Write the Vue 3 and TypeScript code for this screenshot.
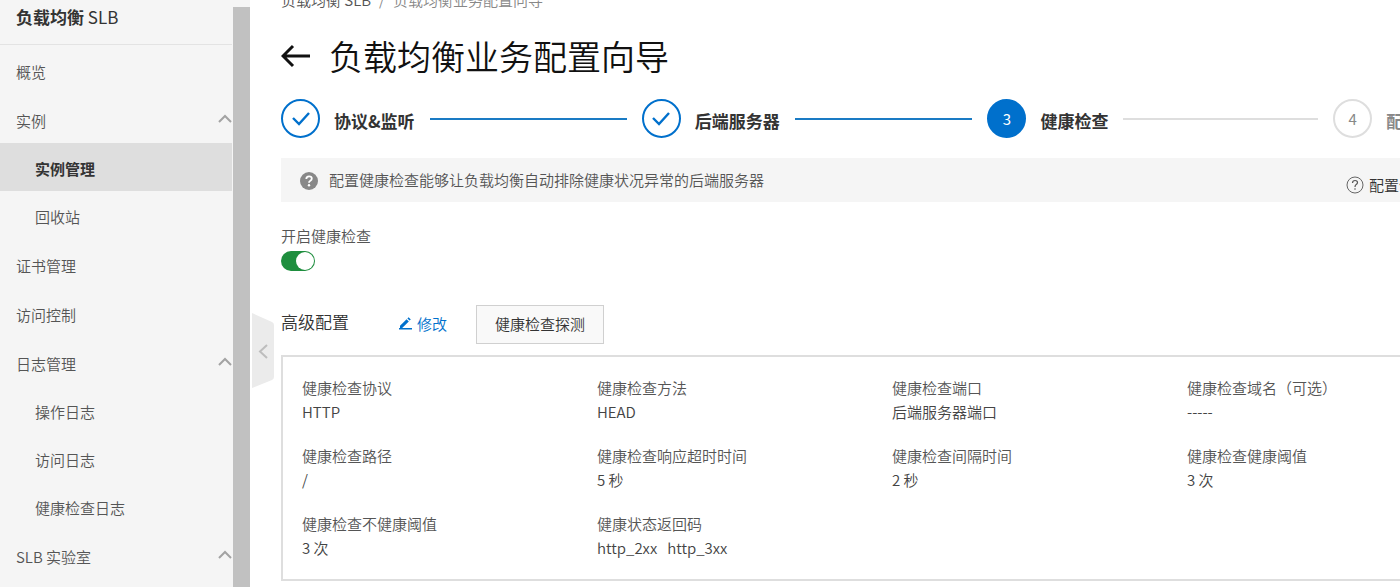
<script setup lang="ts">
import { ref } from 'vue'

interface NavItem {
  label: string
  level: 'top' | 'sub'
  active?: boolean
  expandable?: boolean
}

interface Step {
  label: string
  state: 'done' | 'current' | 'todo'
}

interface Field {
  label: string
  values: string[]
}

const nav: NavItem[] = [
  { label: '概览', level: 'top' },
  { label: '实例', level: 'top', expandable: true },
  { label: '实例管理', level: 'sub', active: true },
  { label: '回收站', level: 'sub' },
  { label: '证书管理', level: 'top' },
  { label: '访问控制', level: 'top' },
  { label: '日志管理', level: 'top', expandable: true },
  { label: '操作日志', level: 'sub' },
  { label: '访问日志', level: 'sub' },
  { label: '健康检查日志', level: 'sub' },
  { label: 'SLB 实验室', level: 'top', expandable: true },
]

const steps: Step[] = [
  { label: '协议&监听', state: 'done' },
  { label: '后端服务器', state: 'done' },
  { label: '健康检查', state: 'current' },
  { label: '配置审核', state: 'todo' },
]

const fields: Field[] = [
  { label: '健康检查协议', values: ['HTTP'] },
  { label: '健康检查方法', values: ['HEAD'] },
  { label: '健康检查端口', values: ['后端服务器端口'] },
  { label: '健康检查域名（可选）', values: ['-----'] },
  { label: '健康检查路径', values: ['/'] },
  { label: '健康检查响应超时时间', values: ['5 秒'] },
  { label: '健康检查间隔时间', values: ['2 秒'] },
  { label: '健康检查健康阈值', values: ['3 次'] },
  { label: '健康检查不健康阈值', values: ['3 次'] },
  { label: '健康状态返回码', values: ['http_2xx', 'http_3xx'] },
]

const enabled = ref(true)
</script>

<template>
  <div class="app">
    <aside class="sidebar">
      <div class="side-body">
        <h2 class="side-title">负载均衡 <span>SLB</span></h2>
        <nav>
          <a
            v-for="item in nav"
            :key="item.label"
            href="#"
            class="nav-item"
            :class="[item.level, { active: item.active }]"
          >
            <span>{{ item.label }}</span>
            <svg v-if="item.expandable" class="caret" viewBox="0 0 14 10" aria-hidden="true">
              <path d="M1 8 7 2l6 6" fill="none" stroke="#a3a3a3" stroke-width="2" />
            </svg>
          </a>
        </nav>
      </div>
      <div class="scroll-track"><div class="scroll-thumb"></div></div>
    </aside>

    <main class="main">
      <button class="collapse" type="button" aria-label="收起">
        <svg viewBox="0 0 22 75" aria-hidden="true">
          <path d="M0 0 20 9q2 1 2 3v52q0 2-2 3L0 75z" fill="#ebebeb" />
          <path d="M15 32 8 38.500l7 6.500" fill="none" stroke="#bdbdbd" stroke-width="2" />
        </svg>
      </button>

      <div class="content">
        <nav class="crumbs">
          <a href="#">负载均衡 SLB</a>
          <span class="slash">/</span>
          <span>负载均衡业务配置向导</span>
        </nav>

        <header class="heading">
          <button class="back" type="button" aria-label="返回">
            <svg viewBox="0 0 30 24" aria-hidden="true">
              <path d="M29 12H3M12 2 2 12l10 10" fill="none" stroke="#111" stroke-width="3" />
            </svg>
          </button>
          <h1>负载均衡业务配置向导</h1>
        </header>

        <ol class="steps">
          <li v-for="(step, i) in steps" :key="step.label" class="step" :class="step.state">
            <span class="dot">
              <svg v-if="step.state === 'done'" viewBox="0 0 20 16" aria-hidden="true">
                <path d="M2 7l6 6L18 2" fill="none" stroke="#0070cc" stroke-width="2.400" />
              </svg>
              <template v-else>{{ i + 1 }}</template>
            </span>
            <span class="step-label">{{ step.label }}</span>
            <span v-if="i < steps.length - 1" class="line"></span>
          </li>
        </ol>

        <section class="notice">
          <svg class="notice-icon" viewBox="0 0 18 18" aria-hidden="true">
            <circle cx="9" cy="9" r="9" fill="#888" />
            <path d="M6.300 7q0-2.700 2.800-2.700 2.700 0 2.700 2.300 0 1.300-1.400 2.100Q9 9.500 9 10.800" fill="none" stroke="#fff" stroke-width="1.800" />
            <circle cx="9" cy="13.300" r="1.200" fill="#fff" />
          </svg>
          <p>配置健康检查能够让负载均衡自动排除健康状况异常的后端服务器</p>
          <a href="#" class="help">
            <svg viewBox="0 0 18 18" aria-hidden="true">
              <circle cx="9" cy="9" r="8" fill="none" stroke="#666" />
              <path d="M6.500 7q0-2.500 2.600-2.500 2.400 0 2.400 2.100 0 1.200-1.300 2Q9 9.400 9 11" fill="none" stroke="#555" stroke-width="1.200" />
              <circle cx="9" cy="13" r=".8" fill="#555" />
            </svg>
            <span>配置健康检查</span>
          </a>
        </section>

        <div class="toggle-field">
          <label for="health-switch">开启健康检查</label>
          <input id="health-switch" v-model="enabled" type="checkbox" role="switch" class="switch" />
        </div>

        <div class="toolbar">
          <h3>高级配置</h3>
          <button class="edit" type="button">
            <svg viewBox="0 0 13 13" aria-hidden="true">
              <path d="M1 8.800 7.600 2.200l2.200 2.200L3.200 11H1z" fill="#0070cc" />
              <path d="M8.400 1.400 9.600.2l2.200 2.200-1.200 1.200zM0 11h13v1.600H0z" fill="#0070cc" />
            </svg>
            <span>修改</span>
          </button>
          <button class="probe" type="button">健康检查探测</button>
        </div>

        <dl class="config">
          <div v-for="field in fields" :key="field.label" class="field">
            <dt>{{ field.label }}</dt>
            <dd><span v-for="value in field.values" :key="value">{{ value }}</span></dd>
          </div>
        </dl>
      </div>
    </main>
  </div>
</template>

<style>
body {
  margin: 0;
  overflow: hidden;
}
</style>

<style scoped>
* {
  box-sizing: border-box;
}

.app {
  display: flex;
  height: 100vh;
  overflow: hidden;
  background: #fff;
  color: #555;
  font-family: "Noto Sans CJK SC", "Open Sans", sans-serif;
  font-size: 15px;
  font-weight: 350;
  line-height: 24px;
}

h1, h2, h3, p, ol, dl, dd {
  margin: 0;
  padding: 0;
}

a {
  color: inherit;
  text-decoration: none;
}

button {
  margin: 0;
  padding: 0;
  border: 0;
  background: none;
  color: inherit;
  font: inherit;
}

svg {
  display: block;
}

/* Sidebar */
.sidebar {
  display: flex;
  flex: none;
  width: 250px;
  background: #f5f5f5;
}

.side-body {
  flex: 1;
}

.side-title {
  height: 45px;
  padding: 5px 16px 0;
  border-bottom: 1px solid #e3e3e3;
  color: #333;
  font-size: 17px;
  font-weight: 700;
}

.side-title span {
  font-weight: 400;
}

.nav-item {
  display: flex;
  align-items: center;
  justify-content: space-between;
  height: 49px;
  padding: 4px 0 0 16px;
}

.nav-item.sub {
  height: 48px;
  padding-left: 35px;
}

.nav-item.active {
  background: #dedede;
  color: #333;
  font-weight: 700;
}

.caret {
  width: 14px;
  height: 10px;
  margin-bottom: 4px;
}

.scroll-track {
  width: 18px;
  padding: 7px 0 0 1px;
}

.scroll-thumb {
  height: 100%;
  background: #c1c1c1;
}

/* Main area */
.main {
  position: relative;
  flex: 1;
  min-width: 0;
  overflow: hidden;
  padding-left: 31px;
}

.collapse {
  position: absolute;
  top: 313px;
  left: 2px;
  width: 22px;
  height: 75px;
}

.content {
  width: calc(100vw - 178px);
}

.crumbs {
  display: flex;
  gap: 8px;
  margin-top: -12px;
  color: #888;
}

.crumbs a {
  color: #555;
}

.heading {
  display: flex;
  align-items: center;
  gap: 18px;
  margin-top: 20px;
  height: 48px;
}

.back svg {
  width: 30px;
  height: 24px;
}

h1 {
  color: #111;
  font-size: 34px;
  font-weight: 350;
  line-height: 48px;
}

.steps {
  display: flex;
  margin-top: 19px;
  list-style: none;
}

.step {
  display: flex;
  align-items: center;
  flex: 346 0 0;
}

.step:first-child {
  flex-grow: 361;
}

.step:last-child {
  flex-grow: 170;
}

.dot {
  display: flex;
  align-items: center;
  justify-content: center;
  width: 39px;
  height: 39px;
  border: 2px solid #0070cc;
  border-radius: 50%;
  font-weight: 400;
}

.dot svg {
  width: 20px;
  height: 16px;
}

.step-label {
  margin: 5px 15px 0 14px;
  color: #333;
  font-size: 17px;
  font-weight: 700;
  white-space: nowrap;
}

.line {
  flex: 1;
  height: 2px;
  margin-right: 15px;
  background: #1a7bc4;
}

.current .dot {
  background: #0070cc;
  color: #fff;
}

.current .line {
  background: #dedede;
}

.todo .dot {
  border-color: #dedede;
  color: #888;
}

.todo .step-label {
  color: #888;
}

.notice {
  display: flex;
  align-items: center;
  height: 44px;
  margin-top: 20px;
  padding: 0 19px;
  background: #f5f5f5;
}

.notice-icon {
  width: 18px;
  height: 18px;
  margin: 2px 11px 0 0;
}

.help {
  display: flex;
  align-items: center;
  gap: 5px;
  margin: 10px 25px 0 auto;
  color: #333;
}

.help svg {
  width: 18px;
  height: 18px;
}

.toggle-field {
  display: flex;
  flex-direction: column;
  align-items: flex-start;
  gap: 3px;
  margin-top: 22px;
}

.switch {
  display: flex;
  align-items: center;
  width: 34px;
  height: 20px;
  margin: 0;
  padding: 1px;
  border-radius: 10px;
  background: #bbb;
  appearance: none;
}

.switch::before {
  width: 18px;
  height: 18px;
  border-radius: 50%;
  background: #fff;
  content: "";
}

.switch:checked {
  justify-content: flex-end;
  background: #1e8e3e;
}

.toolbar {
  display: flex;
  align-items: center;
  margin-top: 34px;
}

h3 {
  margin: 0 50px 6px 0;
  color: #333;
  font-size: 17px;
  font-weight: 350;
}

.edit {
  display: flex;
  align-items: center;
  gap: 5px;
  margin: 0 29px 2px 0;
  color: #0070cc;
}

.edit svg {
  width: 13px;
  height: 13px;
}

.probe {
  height: 39px;
  padding: 0 18px 2px;
  border: 1px solid #d0d0d0;
  background: #f9f9f9;
  color: #333;
}

.config {
  display: grid;
  grid-template-columns: repeat(4, 1fr);
  gap: 20px 0;
  margin-top: 11px;
  padding: 19px;
  border: 2px solid #dedede;
}

.field dd {
  display: flex;
  gap: 10px;
  color: #444;
}
</style>
